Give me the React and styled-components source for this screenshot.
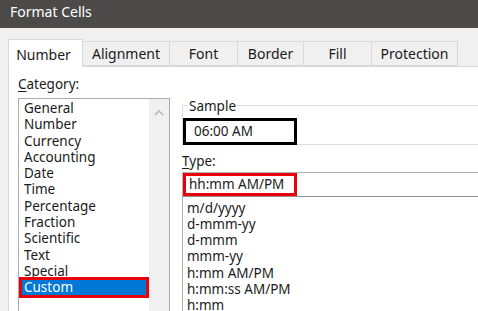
import React from "react";
import styled, { createGlobalStyle } from "styled-components";

const Global = createGlobalStyle`
  html, body { margin: 0; padding: 0; background: #f0f0f0; }
  body { font-family: "Noto Sans", "Open Sans", sans-serif; }
`;

const Window = styled.div`
  width: 478px;
  height: 311px;
  overflow: hidden;
  background: #f0f0f0;
  display: flex;
  flex-direction: column;
  font-size: 13.5px;
  color: #1a1a1a;
`;

const TitleBar = styled.div`
  height: 28px;
  flex: none;
  background: #4b4a48;
  color: #ffffff;
  font-size: 14px;
  line-height: 24px;
  padding-left: 10px;
`;

const Body = styled.div`
  flex: 1;
  display: flex;
  flex-direction: column;
  padding: 10px 0 0 8px;
  min-height: 0;
`;

const Tabs = styled.div`
  display: flex;
  align-items: flex-end;
  height: 28px;
  flex: none;
  position: relative;
  z-index: 1;
`;

const Tab = styled.div`
  box-sizing: border-box;
  width: ${(p) => p.$w}px;
  height: ${(p) => (p.$active ? 28 : 25)}px;
  margin-left: ${(p) => (p.$first ? 0 : -1)}px;
  margin-bottom: ${(p) => (p.$active ? -1 : 0)}px;
  border: 1px solid #d9d9d9;
  border-bottom: ${(p) => (p.$active ? "none" : "1px solid #d9d9d9")};
  background: ${(p) => (p.$active ? "#ffffff" : "#f0f0f0")};
  display: flex;
  align-items: center;
  justify-content: center;
  font-size: 14px;
  padding-top: ${(p) => (p.$active ? 2 : 0)}px;
  padding-right: ${(p) => (p.$active ? 4 : 0)}px;
  color: #1a1a1a;
`;

const Panel = styled.div`
  flex: 1;
  background: #ffffff;
  border-top: 1px solid #d9d9d9;
  border-left: 1px solid #d9d9d9;
  display: flex;
  padding: 9px 0 0 9px;
  min-height: 0;
`;

const LeftCol = styled.div`
  width: 152px;
  flex: none;
  display: flex;
  flex-direction: column;
`;

const Label = styled.div`
  line-height: 16px;
  height: 16px;
  color: #1a1a1a;
  u { text-decoration: underline; text-underline-offset: 2px; }
`;

const ListBox = styled.div`
  margin-top: 6px;
  flex: 1;
  border: 1px solid #acacac;
  border-bottom: none;
  display: flex;
`;

const ListItems = styled.div`
  flex: 1;
  padding-top: 1px;
  display: flex;
  flex-direction: column;
`;

const Item = styled.div`
  line-height: 16.3px;
  height: 16.3px;
  padding-left: ${(p) => (p.$selected ? 3.5 : 5)}px;
  margin: ${(p) => (p.$selected ? "0 2.5px 0 1.5px" : "0")};
  background: ${(p) => (p.$selected ? "#0078d7" : "transparent")};
  color: ${(p) => (p.$selected ? "#ffffff" : "#1a1a1a")};
  outline: ${(p) => (p.$selected ? "3px solid #e8000b" : "none")};
  outline-offset: -1.5px;
  white-space: nowrap;
`;

const ScrollTrack = styled.div`
  width: 20px;
  flex: none;
  background: #f0f0f0;
  display: flex;
  justify-content: center;
  padding-top: 11px;
`;

const RightCol = styled.div`
  margin-left: 12px;
  width: 340px;
  flex: none;
  display: flex;
  flex-direction: column;
  padding-top: 22px;
`;

const GroupHeader = styled.div`
  display: flex;
  align-items: center;
  height: 16px;
  line-height: 16px;
  &::before {
    content: "";
    width: 6px;
    border-top: 1px solid #dcdcdc;
    margin-top: -1px;
  }
  &::after {
    content: "";
    flex: 1;
    border-top: 1px solid #dcdcdc;
    margin-top: -1px;
  }
`;

const GroupTitle = styled.span`
  padding: 0 1px;
`;

const GroupBody = styled.div`
  margin-top: -8px;
  padding-top: 12px;
  border-left: 1px solid #dcdcdc;
  border-bottom: 1px solid #dcdcdc;
`;

const SampleBox = styled.div`
  box-sizing: border-box;
  width: 114px;
  height: 27px;
  margin: 0 0 -1px 0;
  border: 3px solid #000000;
  background: #ffffff;
  padding-left: 8px;
  line-height: 21px;
  position: relative;
`;

const TypeLabel = styled(Label)`
  margin-top: 8px;
`;

const TypeInput = styled.div`
  margin-top: 3px;
  height: 24px;
  box-sizing: border-box;
  border-top: 1px solid #b4b4b4;
  border-left: 1px solid #b4b4b4;
  display: flex;
  align-items: center;
`;

const RedField = styled.div`
  box-sizing: border-box;
  width: 114px;
  height: 23px;
  border: 3px solid #e8000b;
  padding-left: 3px;
  line-height: 17px;
`;

const TypeList = styled.div`
  flex: 1;
  border-top: 1px solid #8f9296;
  border-left: 1px solid #acacac;
  padding: 2.5px 0 0 4px;
  display: flex;
  flex-direction: column;
`;

const TypeItem = styled.div`
  line-height: 16.3px;
  height: 16.3px;
  white-space: nowrap;
`;

const Chevron = () => (
  <svg width="10" height="6" viewBox="0 0 10 6">
    <polyline points="1,5 5,1 9,5" fill="none" stroke="#b8b8b8" strokeWidth="1.6" />
  </svg>
);

const tabs = [
  { t: "Number", w: 75 },
  { t: "Alignment", w: 88 },
  { t: "Font", w: 69 },
  { t: "Border", w: 67 },
  { t: "Fill", w: 69 },
  { t: "Protection", w: 87 },
];

const categories = [
  "General",
  "Number",
  "Currency",
  "Accounting",
  "Date",
  "Time",
  "Percentage",
  "Fraction",
  "Scientific",
  "Text",
  "Special",
  "Custom",
];

const types = [
  "m/d/yyyy",
  "d-mmm-yy",
  "d-mmm",
  "mmm-yy",
  "h:mm AM/PM",
  "h:mm:ss AM/PM",
  "h:mm",
];

export default function App() {
  return (
    <>
      <Global />
      <Window>
        <TitleBar>Format Cells</TitleBar>
        <Body>
          <Tabs>
            {tabs.map((tab, i) => (
              <Tab key={tab.t} $w={tab.w} $first={i === 0} $active={i === 0}>
                {tab.t}
              </Tab>
            ))}
          </Tabs>
          <Panel>
            <LeftCol>
              <Label>
                <u>C</u>ategory:
              </Label>
              <ListBox>
                <ListItems>
                  {categories.map((c) => (
                    <Item key={c} $selected={c === "Custom"}>
                      {c}
                    </Item>
                  ))}
                </ListItems>
                <ScrollTrack>
                  <Chevron />
                </ScrollTrack>
              </ListBox>
            </LeftCol>
            <RightCol>
              <GroupHeader>
                <GroupTitle>Sample</GroupTitle>
              </GroupHeader>
              <GroupBody>
                <SampleBox>06:00 AM</SampleBox>
              </GroupBody>
              <TypeLabel>
                <u>T</u>ype:
              </TypeLabel>
              <TypeInput>
                <RedField>hh:mm AM/PM</RedField>
              </TypeInput>
              <TypeList>
                {types.map((t) => (
                  <TypeItem key={t}>{t}</TypeItem>
                ))}
              </TypeList>
            </RightCol>
          </Panel>
        </Body>
      </Window>
    </>
  );
}
